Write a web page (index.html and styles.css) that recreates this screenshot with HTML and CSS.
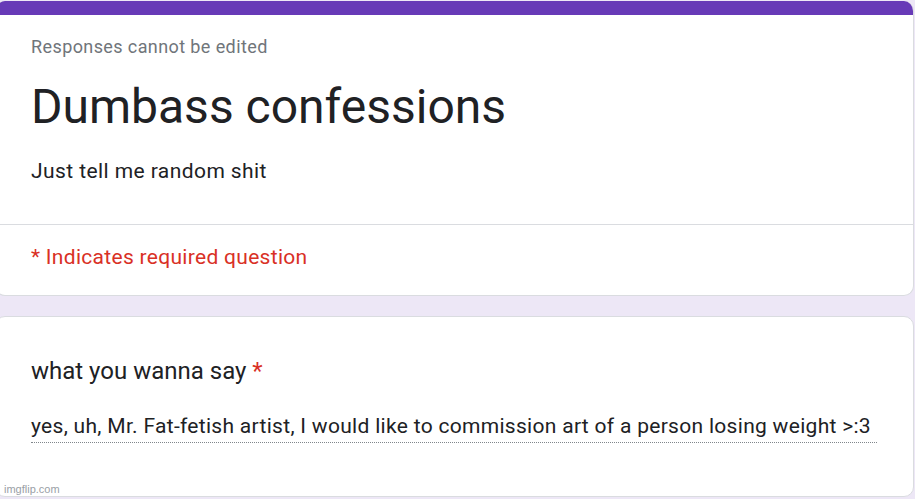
FILE: index.html
```html
<!DOCTYPE html>
<html>
<head>
<meta charset="utf-8">
<link rel="stylesheet" href="styles.css">
</head>
<body>
<div class="page">
  <section class="card header-card">
    <div class="accent"></div>
    <div class="header-main">
      <div class="note">Responses cannot be edited</div>
      <h1 class="title">Dumbass confessions</h1>
      <div class="desc">Just tell me random shit</div>
    </div>
    <div class="required-row">* Indicates required question</div>
  </section>
  <section class="card question-card">
    <div class="question">what you wanna say <span class="star">*</span></div>
    <div class="answer">yes, uh, Mr. Fat-fetish artist, I would like to commission art of a person losing weight &gt;:3</div>
  </section>
</div>
<div class="watermark">imgflip.com</div>
</body>
</html>
```
FILE: styles.css
```css
html, body {
  margin: 0;
  padding: 0;
  background: #ede7f6;
  font-family: Roboto, "Noto Sans", Arial, sans-serif;
  color: #202124;
  overflow: hidden;
}
.page {
  display: flex;
  flex-direction: column;
  gap: 20px;
  padding-top: 1px;
  margin-left: -5px;
  width: 919px;
}
.card {
  background: #ffffff;
  border: 1px solid #dadce0;
  border-radius: 10px;
  overflow: hidden;
  box-sizing: border-box;
}
.header-card {
  border-top: 0;
}
.accent {
  height: 14px;
  background: #673ab7;
}
.header-main {
  padding: 20px 35px 39px 35px;
  border-bottom: 1px solid #dadce0;
}
.note {
  font-size: 18px;
  line-height: 24px;
  letter-spacing: 0.4px;
  color: #70757a;
}
.title {
  margin: 18px 0 0 0;
  font-size: 48px;
  line-height: 60px;
  font-weight: 400;
  color: #202124;
}
.desc {
  margin-top: 20px;
  font-size: 21px;
  line-height: 28px;
  letter-spacing: 0.42px;
  color: #202124;
}
.required-row {
  padding: 18px 35px 24px 35px;
  font-size: 21px;
  line-height: 28px;
  letter-spacing: 0.3px;
  color: #d93025;
}
.question-card {
  padding: 38px 36px 53px 35px;
}
.question {
  font-size: 24px;
  line-height: 32px;
  color: #202124;
}
.star {
  color: #d93025;
}
.answer {
  margin-top: 25px;
  font-size: 21px;
  line-height: 28px;
  letter-spacing: 0.3px;
  padding-bottom: 2px;
  border-bottom: 1px dotted #80868b;
  color: #202124;
  white-space: nowrap;
}
.watermark {
  position: absolute;
  left: 4px;
  top: 483px;
  font-family: "Liberation Sans", Arial, sans-serif;
  font-size: 11px;
  color: #9aa0a6;
}
```
